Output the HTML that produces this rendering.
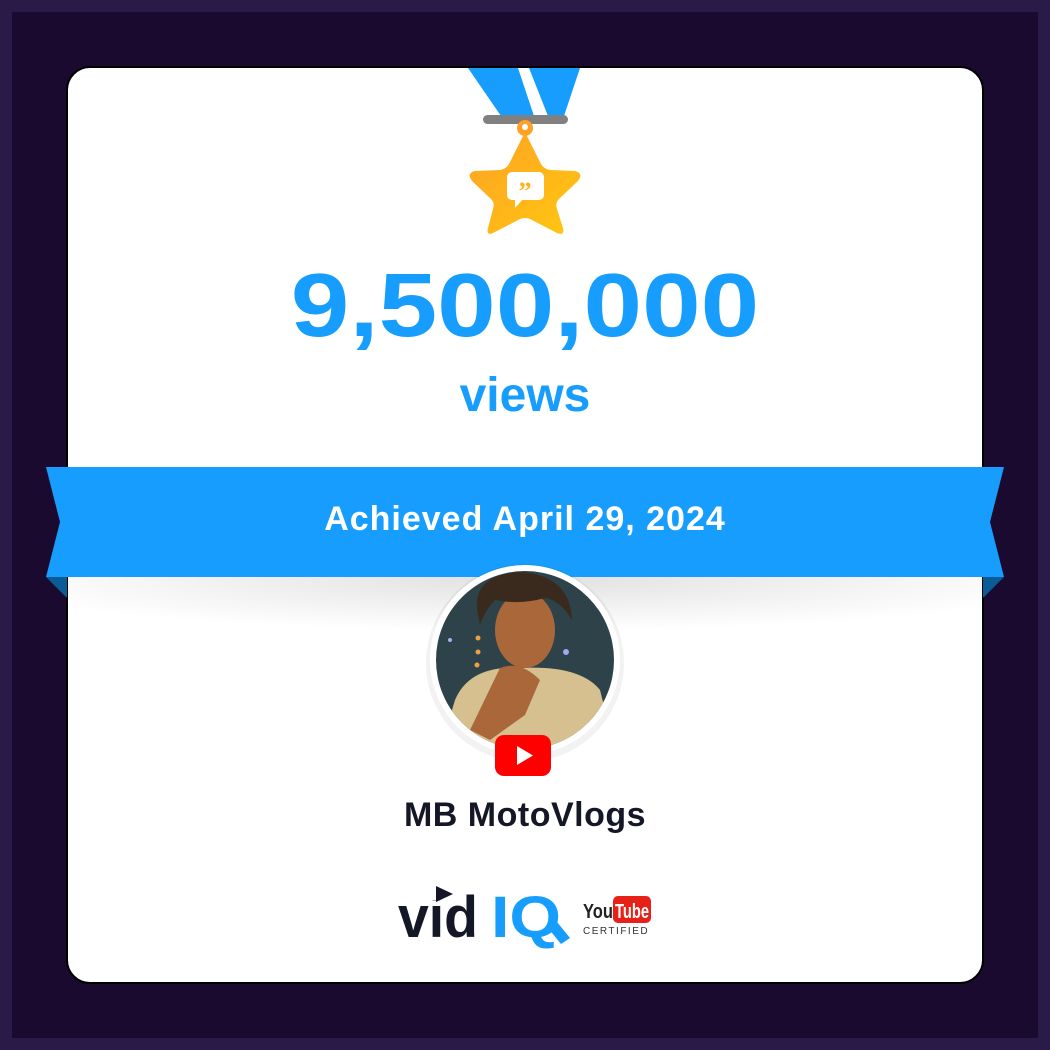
<!DOCTYPE html>
<html><head><meta charset="utf-8"><style>
*{margin:0;padding:0;box-sizing:border-box}
body{width:1050px;height:1050px;background:#2a1a48;position:relative;overflow:hidden;font-family:"Liberation Sans",sans-serif}
.inner{position:absolute;left:12px;top:12px;width:1026px;height:1026px;background:#1a0a30}
.card{position:absolute;left:66px;top:66px;width:918px;height:918px;background:#fff;border:2px solid #000;border-radius:24px;overflow:hidden}
.t{position:absolute;left:0;width:1050px;text-align:center;font-weight:bold}
</style></head><body>
<div class="inner"></div>
<div class="card"></div>
<svg style="position:absolute;left:0;top:0" width="1050" height="1050">
<defs><linearGradient id="g" x1="0" y1="0" x2="1" y2="1"><stop offset="0" stop-color="#ffa126"/><stop offset="1" stop-color="#ffc70f"/></linearGradient>
<radialGradient id="sh" cx="0.5" cy="0" r="0.6"><stop offset="0" stop-color="#000" stop-opacity="0.12"/><stop offset="1" stop-color="#000" stop-opacity="0"/></radialGradient>
<clipPath id="cc"><circle cx="525" cy="660" r="89"/></clipPath></defs>
<polygon points="468,68 518,68 534,116 501,116" fill="#169dfd"/>
<polygon points="529,68 580,68 564,116 548,116" fill="#169dfd"/>
<rect x="483" y="115" width="85" height="9" rx="4.5" fill="#808080"/>
<circle cx="525" cy="128" r="8" fill="#ffa126"/><circle cx="525" cy="127" r="3" fill="#fff"/>
<path d="M525 132 L541 164 Q544 169 550 170 L575 171 Q584 173 578 181 L559 199 Q555 203 557 209 L563 228 Q565 236 557 233 L530 219 Q525 217 520 219 L493 233 Q486 236 488 228 L493 209 Q495 203 491 199 L472 181 Q466 173 475 171 L500 170 Q506 169 509 164 Z" fill="url(#g)"/>
<rect x="507" y="172" width="37" height="28" rx="5" fill="#fff"/><polygon points="515,198 515,208 524,198" fill="#fff"/>
<text x="525" y="200" text-anchor="middle" font-family="Liberation Serif" font-weight="bold" font-size="26" fill="#ffb01e">”</text>
<rect x="60" y="577" width="930" height="90" fill="url(#sh)"/>
<polygon points="46,577 67,577 67,598" fill="#0a5c96"/>
<polygon points="1004,577 983,577 983,598" fill="#0a5c96"/>
<polygon points="46,467 1004,467 990,522 1004,577 46,577 60,522" fill="#169dfd"/>
<circle cx="525" cy="663" r="99" fill="#000" opacity="0.05"/>
<circle cx="525" cy="660" r="95" fill="#fff"/>
<g clip-path="url(#cc)">
<rect x="430" y="565" width="190" height="190" fill="#2e4249"/>
<circle cx="450" cy="640" r="2" fill="#9fb7e8"/><circle cx="478" cy="638" r="2.5" fill="#f0a040"/><circle cx="478" cy="652" r="2.5" fill="#f0a040"/><circle cx="477" cy="665" r="2.5" fill="#f0a040"/><circle cx="566" cy="652" r="3" fill="#a0a8f0"/>
<path d="M455 700 Q470 665 520 668 Q580 665 600 690 L615 750 L440 750 Z" fill="#d6c08f"/>
<ellipse cx="525" cy="630" rx="30" ry="38" fill="#a9673a"/>
<path d="M478 615 Q470 575 520 572 Q570 575 572 620 Q560 600 545 598 Q520 605 495 600 Q485 610 480 625 Z" fill="#3a2a1e"/>
<path d="M500 668 Q520 660 540 680 L525 715 L490 740 L470 730 Z" fill="#a9673a"/>
</g>
<rect x="495" y="735" width="56" height="41" rx="9" fill="#ff0000"/>
<polygon points="517,746 517,765 533,755.5" fill="#fff"/>
<text x="398" y="937" font-family="Liberation Sans" font-weight="bold" font-size="58" fill="#141726" textLength="80" lengthAdjust="spacingAndGlyphs">vid</text>
<rect x="432" y="884" width="20" height="16" fill="#fff"/>
<polygon points="436,886 436,902 453,894" fill="#141726"/>
<text x="491" y="937" font-family="Liberation Sans" font-weight="bold" font-size="58" fill="#169dfd" textLength="70" lengthAdjust="spacingAndGlyphs">IQ</text>
<polygon points="548,928 557,922 570,938 561,944" fill="#169dfd"/>
<text x="583" y="918" font-family="Liberation Sans" font-weight="bold" font-size="20" fill="#222" textLength="30" lengthAdjust="spacingAndGlyphs">You</text>
<rect x="613" y="896" width="38" height="27" rx="5" fill="#e62117"/>
<text x="615" y="918" font-family="Liberation Sans" font-weight="bold" font-size="20" fill="#fff" textLength="34" lengthAdjust="spacingAndGlyphs">Tube</text>
<text x="583" y="934" font-family="Liberation Sans" font-size="10" fill="#333" letter-spacing="1.5">CERTIFIED</text>
</svg>
<div class="t" style="top:256px;font-size:90px;color:#169dfd;line-height:100px;transform:scaleX(1.17)">9,500,000</div>
<div class="t" style="top:368px;font-size:48px;color:#169dfd;line-height:56px">views</div>
<div class="t" style="top:499px;font-size:34px;color:#fff;line-height:40px;letter-spacing:1px">Achieved April 29, 2024</div>
<div class="t" style="top:795px;font-size:34px;color:#141726;line-height:40px;letter-spacing:0.5px">MB MotoVlogs</div>
</body></html>
